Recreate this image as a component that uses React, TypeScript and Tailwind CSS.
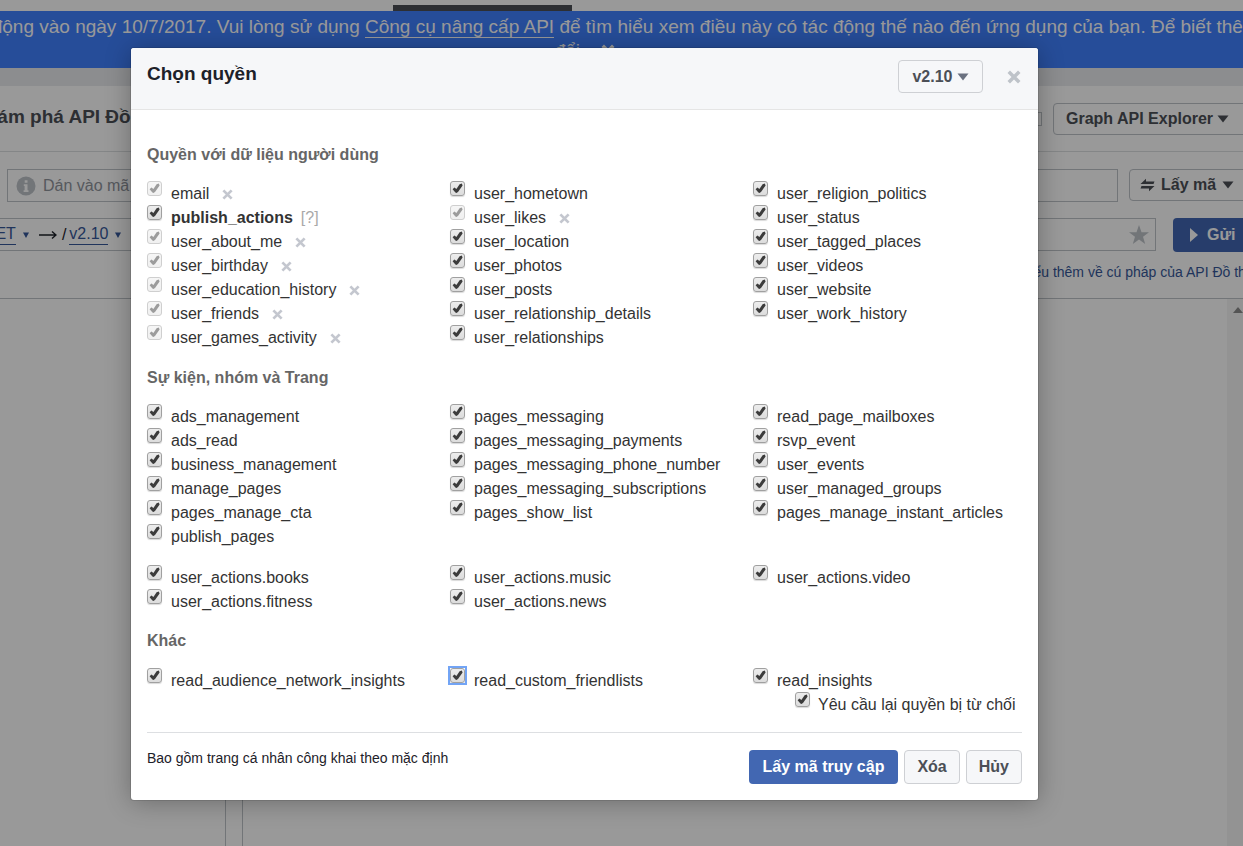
import type { ReactNode } from 'react'
import { clsx } from 'clsx'

interface Permission {
  name: string
  /** Already granted: the box is disabled and the permission can be revoked. */
  granted?: boolean
  strong?: boolean
  focused?: boolean
}

const granted = (name: string): Permission => ({ name, granted: true })
const plain = (name: string): Permission => ({ name })

const USER_DATA: Permission[][] = [
  [
    granted('email'),
    { name: 'publish_actions', strong: true },
    granted('user_about_me'),
    granted('user_birthday'),
    granted('user_education_history'),
    granted('user_friends'),
    granted('user_games_activity'),
  ],
  [
    plain('user_hometown'),
    granted('user_likes'),
    plain('user_location'),
    plain('user_photos'),
    plain('user_posts'),
    plain('user_relationship_details'),
    plain('user_relationships'),
  ],
  [
    plain('user_religion_politics'),
    plain('user_status'),
    plain('user_tagged_places'),
    plain('user_videos'),
    plain('user_website'),
    plain('user_work_history'),
  ],
]

const PAGES: Permission[][] = [
  ['ads_management', 'ads_read', 'business_management', 'manage_pages', 'pages_manage_cta', 'publish_pages'].map(plain),
  [
    'pages_messaging',
    'pages_messaging_payments',
    'pages_messaging_phone_number',
    'pages_messaging_subscriptions',
    'pages_show_list',
  ].map(plain),
  ['read_page_mailboxes', 'rsvp_event', 'user_events', 'user_managed_groups', 'pages_manage_instant_articles'].map(plain),
]

const ACTIONS: Permission[][] = [
  ['user_actions.books', 'user_actions.fitness'].map(plain),
  ['user_actions.music', 'user_actions.news'].map(plain),
  ['user_actions.video'].map(plain),
]

const OTHER: Permission[][] = [
  [plain('read_audience_network_insights')],
  [{ name: 'read_custom_friendlists', focused: true }],
  [plain('read_insights')],
]

function Caret({ className }: { className?: string }) {
  return (
    <svg viewBox="0 0 12 8" className={clsx('h-2 w-3 shrink-0', className)} fill="currentColor" aria-hidden="true">
      <path d="M0.5 0.5h11L6 7.5z" />
    </svg>
  )
}

function SmallCaret() {
  return (
    <svg viewBox="0 0 6 6" className="size-1.5 shrink-0" fill="currentColor" aria-hidden="true">
      <path d="M0 0.5h6L3 6z" />
    </svg>
  )
}

function Cross({ className }: { className?: string }) {
  return (
    <svg viewBox="0 0 12 12" className={className} stroke="currentColor" strokeWidth="3" aria-hidden="true">
      <path d="M1.5 1.5l9 9M10.5 1.5l-9 9" />
    </svg>
  )
}

function CheckBox({ id, disabled, focused }: { id: string; disabled?: boolean; focused?: boolean }) {
  return (
    <span className={clsx('relative size-[15px] shrink-0', focused && 'outline-2 outline-[#72a4f5]')}>
      <input
        id={id}
        type="checkbox"
        defaultChecked
        disabled={disabled}
        className={clsx(
          'peer block size-[15px] appearance-none rounded-[3px] border bg-linear-to-b',
          disabled
            ? 'border-[#cfcfcf] from-[#f6f6f6] to-[#f0f0f0]'
            : 'border-[#a0a0a0] from-[#ededed] to-[#dcdcdc] shadow-[0_1px_1px_rgba(0,0,0,0.15)]',
        )}
      />
      <svg
        viewBox="0 0 15 15"
        className={clsx(
          'pointer-events-none absolute inset-0 hidden size-[15px] peer-checked:block',
          disabled ? 'text-[#9c9c9c]' : 'text-[#3c3c3c]',
        )}
        fill="currentColor"
        aria-hidden="true"
      >
        <path d="M2.6 8.2L4.4 6.6l2 1.4L9.6 3.2l2.2-.7.8 2-4.4 6.2-1.6 1.2-1.2-.4z" />
      </svg>
    </span>
  )
}

function PermissionRow({ permission }: { permission: Permission }) {
  const { name, strong, focused } = permission
  return (
    <li className="flex h-6">
      <CheckBox id={name} disabled={permission.granted} focused={focused} />
      <label htmlFor={name} className={clsx('ml-[9px] mt-px leading-6', strong && 'font-bold')}>
        {name}
      </label>
      {permission.granted && (
        <button type="button" aria-label={`Xóa ${name}`} className="ml-[13px] mt-2 size-[11px] text-[#c4c7cf]">
          <Cross className="size-[11px]" />
        </button>
      )}
      {strong && (
        <a href="#help" className="ml-2 mt-px leading-6 text-[#a9a9a9]">
          [?]
        </a>
      )}
    </li>
  )
}

function PermissionGrid({ columns, className }: { columns: Permission[][]; className?: string }) {
  return (
    <div className={clsx('-mr-[34px] grid grid-cols-3', className)}>
      {columns.map((column) => (
        <ul key={column[0].name}>
          {column.map((permission) => (
            <PermissionRow key={permission.name} permission={permission} />
          ))}
        </ul>
      ))}
    </div>
  )
}

function SectionTitle({ children, className }: { children: ReactNode; className?: string }) {
  return <h3 className={clsx('font-bold leading-6 text-[#666]', className)}>{children}</h3>
}

function PermissionDialog() {
  return (
    <section
      role="dialog"
      aria-labelledby="dialog-title"
      className="w-full max-w-[907px] rounded-[3px] bg-white text-base text-[#333] shadow-[0_2px_26px_rgba(0,0,0,0.3),0_0_0_1px_rgba(0,0,0,0.1)]"
    >
      <header className="flex h-[62px] justify-between rounded-t-[3px] border-b border-[#e5e5e5] bg-[#f6f7f9] pb-1 pl-4 pr-[17px]">
        <h2 id="dialog-title" className="mt-3 text-[19px] font-bold leading-7 text-[#1d2129]">
          Chọn quyền
        </h2>
        <div className="flex items-center">
          <button
            type="button"
            className="flex h-[33px] w-[85px] items-center justify-center gap-1 rounded-sm border border-[#ced0d4] bg-[#f6f7f9] font-bold text-[#4b4f56]"
          >
            v2.10
            <Caret className="text-[#6a7180]" />
          </button>
          <button type="button" aria-label="Đóng" className="ml-6 text-[#bec3c9]">
            <Cross className="size-3.5" />
          </button>
        </div>
      </header>

      <div className="px-4 pt-[33px]">
        <SectionTitle>Quyền với dữ liệu người dùng</SectionTitle>
        <PermissionGrid columns={USER_DATA} className="mt-3.5" />

        <SectionTitle className="mt-[17px]">Sự kiện, nhóm và Trang</SectionTitle>
        <PermissionGrid columns={PAGES} className="mt-3.5" />
        <PermissionGrid columns={ACTIONS} className="mt-[17px]" />

        <SectionTitle className="mt-4">Khác</SectionTitle>
        <PermissionGrid columns={OTHER} className="mt-[15px]" />

        <div className="flex h-[41px] justify-end border-b border-[#dddfe2]">
          <CheckBox id="rerequest" />
          <label htmlFor="rerequest" className="ml-2 mt-px w-[204px] leading-6">
            Yêu cầu lại quyền bị từ chối
          </label>
        </div>
      </div>

      <footer className="flex justify-between px-4 pb-4 pt-[17px]">
        <p className="text-sm leading-4 text-[#1d2129]">Bao gồm trang cá nhân công khai theo mặc định</p>
        <div className="flex gap-1.5 font-bold">
          <button type="button" className="h-[34px] rounded-sm bg-[#4267b2] px-3.5 text-white">
            Lấy mã truy cập
          </button>
          <button type="button" className="h-[34px] rounded-sm border border-[#ced0d4] bg-[#f6f7f9] px-3 text-[#4b4f56]">
            Xóa
          </button>
          <button type="button" className="h-[34px] rounded-sm border border-[#ced0d4] bg-[#f6f7f9] px-3 text-[#4b4f56]">
            Hủy
          </button>
        </div>
      </footer>
    </section>
  )
}

/** The Graph API Explorer, wider than the window and scrolled a little to the right. */
function ExplorerPage() {
  return (
    <div className="-ml-16 -mr-16 flex min-h-screen flex-col whitespace-nowrap bg-white pt-[5px]">
      <div className="ml-[457px] h-1.5 w-[179px] bg-[#4b4f56]" />
      <div className="flex h-[57px] flex-col items-center overflow-hidden bg-[#4080ff] pr-[73px] pt-1 text-[19px] leading-6 text-white">
        <p>
          Phiên bản API v2.3 này sẽ ngừng hoạt động vào ngày 10/7/2017. Vui lòng sử dụng{' '}
          <a href="#upgrade" className="border-b border-white">
            Công cụ nâng cấp API
          </a>{' '}
          để tìm hiểu xem điều này có tác động thế nào đến ứng dụng của bạn. Để biết thêm chi tiết, hãy xem nhật ký thay
        </p>
        <p className="flex items-center gap-4">
          đổi.
          <button type="button" aria-label="Ẩn thông báo">
            <Cross className="size-3.5" />
          </button>
        </p>
      </div>
      <div className="h-[18px] bg-[#e9ebee]" />

      <div className="flex h-[66px] items-center justify-between border-b border-[#dddfe2] pl-9">
        <h1 className="pb-0.5 text-[19px] font-bold text-[#4b4f56]">Khám phá API Đồ thị</h1>
        <div className="flex w-[276px] items-center gap-[11px]">
          <input type="text" aria-label="Ứng dụng" className="h-3.5 w-[11px] border border-[#bec3c9]" />
          <button
            type="button"
            className="flex h-8 w-[200px] items-center gap-1 rounded-sm border border-[#bec3c9] px-3 font-bold text-[#4b4f56]"
          >
            Graph API Explorer
            <Caret />
          </button>
        </div>
      </div>

      <div className="mt-[17px] flex gap-[11px] pl-[71px]">
        <label className="flex h-[33px] flex-1 items-center border border-[#bec3c9] pl-2">
          <svg viewBox="0 0 20 20" className="size-5 shrink-0" aria-hidden="true">
            <circle cx="10" cy="10" r="9.5" fill="#bec3c9" />
            <path d="M8.7 4.2h2.8v2.6H8.7zM7.8 8.3h3.7v6h1v1.6H7.6v-1.6h1v-4.4h-.8z" fill="#fff" />
          </svg>
          <input type="text" aria-label="Mã truy cập" placeholder="Dán vào mã truy cập" className="ml-[7px] flex-1 placeholder:text-[#90949c]" />
        </label>
        <button
          type="button"
          className="flex h-8 w-[178px] items-center gap-1.5 rounded-sm border border-[#bec3c9] px-2.5 font-bold text-[#4b4f56]"
        >
          <svg viewBox="0 0 15 14" className="h-3.5 w-[15px]" fill="currentColor" aria-hidden="true">
            <path d="M0.5 6L6 0.8v2.7h8.5L13.5 6zM14.5 8L9 13.2v-2.7H0.5L1.5 8z" />
          </svg>
          Lấy mã
          <Caret />
        </button>
      </div>

      <div className="mt-4 flex gap-[17px]">
        <div className="flex h-[33px] flex-1 items-center border border-[#bec3c9] pl-[46px] text-[#365899]">
          <a href="#method" className="mr-[7px] border-b border-[#365899] leading-5">
            GET
          </a>
          <SmallCaret />
          <svg viewBox="0 0 18 10" className="ml-2.5 h-2.5 w-[18px]" fill="none" stroke="#1d2129" strokeWidth="1.4" aria-hidden="true">
            <path d="M0 5h17M13 1.5L17 5l-4 3.5" />
          </svg>
          <span className="ml-[5px] text-[#1d2129]">/</span>
          <a href="#version" className="ml-[3px] mr-[7px] border-b border-[#365899] leading-5">
            v2.10
          </a>
          <SmallCaret />
          <svg viewBox="0 0 20 20" className="ml-auto mr-1.5 size-5" fill="#bec3c9" aria-hidden="true">
            <path d="M10 0l2.5 7.2H20l-6 4.5 2.2 7.3L10 14.6 3.8 19 6 11.7 0 7.2h7.5z" />
          </svg>
        </div>
        <button type="button" className="flex h-[34px] w-[134px] items-center gap-2 rounded-sm bg-[#4267b2] px-4 font-bold text-white">
          <svg viewBox="0 0 10 14" className="h-3.5 w-2.5" fill="currentColor" aria-hidden="true">
            <path d="M1 0l8 7-8 7z" />
          </svg>
          Gửi
        </button>
      </div>

      <div className="flex h-[46px] items-center justify-end pb-1.5 pr-[58px]">
        <a href="#syntax" className="text-sm text-[#365899]">
          Tìm hiểu thêm về cú pháp của API Đồ thị
        </a>
      </div>

      <div className="flex flex-1 border-t border-[#bec3c9]">
        <div className="w-[290px] border-r border-[#bec3c9]" />
        <div className="ml-4 flex-1 border-l border-[#bec3c9]" />
        <div className="w-20 bg-[#f6f6f6] pl-1.5 pt-2">
          <svg viewBox="0 0 10 6" className="h-1.5 w-2.5" fill="#8c8c8c" aria-hidden="true">
            <path d="M5 0l5 6H0z" />
          </svg>
        </div>
      </div>
    </div>
  )
}

export default function App() {
  return (
    <div className="relative min-h-screen overflow-hidden font-['Liberation_Sans',Arial,sans-serif]">
      <ExplorerPage />
      <div className="absolute inset-0 flex items-start bg-black/40 pl-[131px] pt-12">
        <PermissionDialog />
      </div>
    </div>
  )
}
